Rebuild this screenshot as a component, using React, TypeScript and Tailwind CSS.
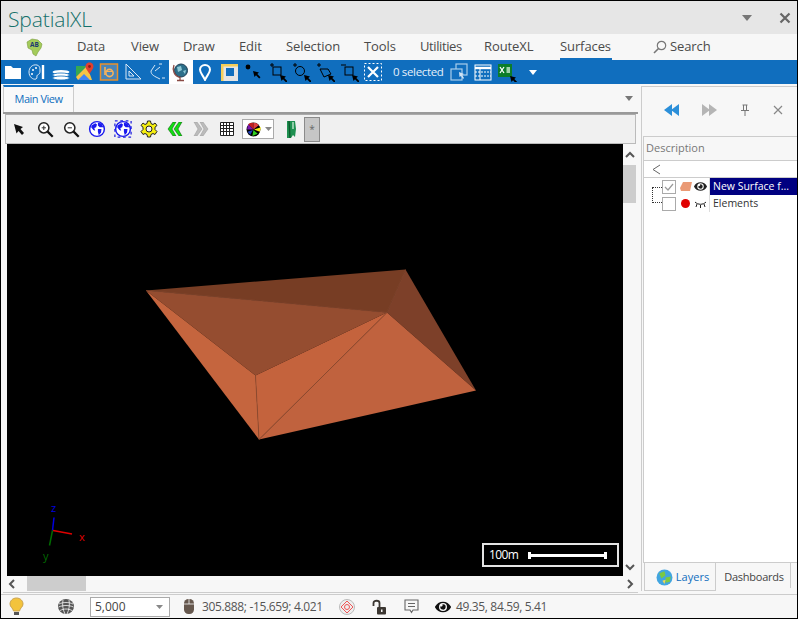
import type { ReactNode } from "react";
import { FaEye } from "react-icons/fa";

const font = "font-['Open_Sans','Liberation_Sans',sans-serif]";

function Cursor({ x = 11, y = 11 }: { x?: number; y?: number }) {
  return <path transform={`translate(${x} ${y})`} d="M0 0 L6 1.5 L4.3 3 L7.5 6.2 L6.2 7.5 L3 4.3 L1.5 6 Z" fill="#000" />;
}

function Svg({ children, size = 20 }: { children: ReactNode; size?: number }) {
  return (
    <svg width={size} height={size} viewBox="0 0 20 20" fill="none">
      {children}
    </svg>
  );
}

function Globe({ dashed = false }: { dashed?: boolean }) {
  return (
    <Svg size={18}>
      {dashed && <rect x="1" y="1" width="18" height="18" stroke="#2222dd" strokeWidth="1.4" strokeDasharray="3 3" />}
      <circle cx="10" cy="10" r="8.2" fill="#fff" stroke="#1a1aee" strokeWidth="1.6" />
      <path d="M4 6 L8 3.5 L10 5 L9 8 L7 9 L8 12 L6 11 L3.5 8 Z M11 3 L15 4 L17 8 L13 8 L11 6 Z M11 10 L15 10 L14.5 14 L12 17 L11 13 Z" fill="#1a1aee" />
    </Svg>
  );
}

function Chevrons({ color, flip = false }: { color: string; flip?: boolean }) {
  return (
    <svg width="16" height="14" viewBox="0 0 16 14" className={flip ? "-scale-x-100" : ""}>
      <path d="M6 0 L9 0 L5 7 L9 14 L6 14 L1 7 Z M12 0 L15 0 L11 7 L15 14 L12 14 L7 7 Z" fill={color} stroke={color === "#11dd11" ? "#0a4d0a" : "#999"} strokeWidth="0.5" />
    </svg>
  );
}

function Magnifier({ plus }: { plus: boolean }) {
  return (
    <Svg size={17}>
      <circle cx="8" cy="8" r="6" fill="#fff" stroke="#222" strokeWidth="1.8" />
      <path d="M5.5 8 H10.5" stroke="#333" strokeWidth="1.2" />
      {plus && <path d="M8 5.5 V10.5" stroke="#333" strokeWidth="1.2" />}
      <path d="M12.5 12.5 L18.5 18.5" stroke="#111" strokeWidth="2.6" />
    </Svg>
  );
}

const blueIcons: ReactNode[] = [
  <Svg key="folder">
    <path d="M2 4 H8 L10 6 H18 V17 H2 Z" fill="#fff" />
  </Svg>,
  <Svg key="palette">
    <path d="M10 3 C5 2 2 6 2 10 C2 15 6 18 9 17 C11 16 9 14 10.5 13 C12 12 13 12 13 9 C13 6 13 4 10 3 Z" stroke="#dbe8f5" strokeWidth="1" />
    <circle cx="6" cy="8" r="1" fill="#fff" />
    <circle cx="9" cy="6" r="1" fill="#fff" />
    <circle cx="5" cy="12" r="1" fill="#fff" />
    <path d="M16 3 V17" stroke="#fff" strokeWidth="2.4" />
  </Svg>,
  <Svg key="layers">
    <ellipse cx="10" cy="10" rx="8.5" ry="2" fill="#fff" />
    <ellipse cx="10" cy="13" rx="8.5" ry="2" fill="#fff" stroke="#106ebe" strokeWidth="0.8" />
    <ellipse cx="10" cy="16" rx="8.5" ry="2" fill="#fff" stroke="#106ebe" strokeWidth="0.8" />
  </Svg>,
  <Svg key="maps">
    <path d="M1 4 H12 L1 15 Z" fill="#35a852" />
    <path d="M1 15 L12 4 L17 18 H3 Z" fill="#f6c445" />
    <path d="M3 18 L9 12 L15 18 Z" fill="#4285f4" />
    <path d="M14.5 0.5 C11.5 0.5 10.5 3 10.5 4.5 C10.5 7 13 9 14.5 12 C16 9 18.5 7 18.5 4.5 C18.5 3 17.5 0.5 14.5 0.5 Z" fill="#e2402f" />
    <circle cx="14.5" cy="4.5" r="1.4" fill="#8c1d18" />
  </Svg>,
  <Svg key="bing">
    <rect x="1.5" y="2" width="17" height="16" fill="#4a85b8" stroke="#e8912d" strokeWidth="1.5" />
    <circle cx="10.5" cy="11" r="3.6" stroke="#f6b25a" strokeWidth="1.6" />
    <path d="M6 5 V13" stroke="#f6b25a" strokeWidth="1.6" />
    <path d="M6 9.5 H14" stroke="#f6b25a" strokeWidth="1" />
  </Svg>,
  <Svg key="square">
    <path d="M3 2 V17 H18 Z M6 9 V14 H11 Z" stroke="#dbe8f5" strokeWidth="1" />
  </Svg>,
  <Svg key="axes">
    <path d="M8 3 L4 9 C4 13 7 14 13 17 M8 9 L13 5" stroke="#dbe8f5" strokeWidth="1" />
    <path d="M12 2 H15 M15 16 H18" stroke="#dbe8f5" strokeWidth="1" />
  </Svg>,
];

const drawIcons: ReactNode[] = [
  <Svg key="dot">
    <circle cx="5" cy="5" r="2.4" fill="#000" />
    <Cursor x={10} y={9} />
  </Svg>,
  <Svg key="rect">
    <path d="M3 3 H7 M5 1 V5" stroke="#000" />
    <rect x="6" y="5" width="8" height="8" stroke="#000" />
    <Cursor x={13} y={13} />
  </Svg>,
  <Svg key="circle">
    <path d="M2 3 H6 M4 1 V5" stroke="#000" />
    <circle cx="9" cy="9" r="4.5" stroke="#000" />
    <Cursor x={13} y={13} />
  </Svg>,
  <Svg key="poly">
    <path d="M2 3 H6 M4 1 V5" stroke="#000" />
    <path d="M5 7 L13 7 L16 12 L9 15 Z" stroke="#000" />
    <Cursor x={13} y={13} />
  </Svg>,
  <Svg key="minus">
    <path d="M2 3 H7" stroke="#000" />
    <rect x="6" y="5" width="8" height="8" stroke="#000" />
    <Cursor x={13} y={13} />
  </Svg>,
  <Svg key="clear">
    <rect x="1.5" y="1.5" width="17" height="17" stroke="#fff" strokeDasharray="2 2" />
    <path d="M5 5 L15 15 M15 5 L5 15" stroke="#fff" strokeWidth="2.2" />
  </Svg>,
];

function Slot({ children, active = false }: { children: ReactNode; active?: boolean }) {
  return <div className={`w-6 h-6 flex items-center justify-center ${active ? "bg-white" : ""}`}>{children}</div>;
}

function Tool({ children }: { children: ReactNode }) {
  return <div className="w-[26px] h-full flex items-center justify-center shrink-0">{children}</div>;
}

function Scene() {
  return (
    <svg viewBox="7 144 616 431" className="w-full h-full block">
      <polygon points="146,290 405.5,269 387,312" fill="#773d24" />
      <polygon points="405.5,269 476,390 387,312" fill="#7d4029" />
      <polygon points="146,290 387,312 255.5,375" fill="#954d30" />
      <polygon points="146,290 255.5,375 259,439" fill="#c5653e" />
      <polygon points="255.5,375 387,312 259,439" fill="#c4633d" />
      <polygon points="387,312 476,390 259,439" fill="#c0623e" />
      <path d="M255.5 375 L259 439 M387 312 L259 439 M146 290 L387 312 M387 312 L405.5 269" stroke="#8a4a30" strokeWidth="0.7" />
      <path d="M52.5 530 L54 517" stroke="#0000e0" strokeWidth="1.5" />
      <path d="M53 530 L72 533.5" stroke="#e00000" strokeWidth="1.5" />
      <path d="M52.5 530 L49.5 545" stroke="#006a00" strokeWidth="1.5" />
      <text x="51" y="511" fontSize="11" fill="#0000e0" fontFamily="Open Sans">z</text>
      <text x="79" y="540" fontSize="11" fill="#e00000" fontFamily="Open Sans">x</text>
      <text x="43" y="559" fontSize="11" fill="#006a00" fontFamily="Open Sans">y</text>
    </svg>
  );
}

function ScaleBar() {
  return (
    <div className="absolute left-[475px] top-[399px] w-[137px] h-[24px] border-2 border-[#e4e4e4] flex items-center text-white text-[12px] tracking-[-0.6px]">
      <span className="ml-[5px] w-[39px]">100m</span>
      <div className="w-[79px] h-[3px] bg-white relative">
        <div className="absolute left-0 top-[-2px] w-[3px] h-[7px] bg-white" />
        <div className="absolute right-0 top-[-2px] w-[3px] h-[7px] bg-white" />
      </div>
    </div>
  );
}

function Arrow({ d }: { d: string }) {
  return (
    <svg width="10" height="10" viewBox="0 0 10 10" fill="none">
      <path d={d} stroke="#555" strokeWidth="2" />
    </svg>
  );
}

export default function App() {
  return (
    <div className={`w-[798px] h-[619px] border border-black bg-[#f7f7f7] flex flex-col overflow-hidden text-[#444] ${font}`}>
      {/* title bar */}
      <div className="h-[33px] shrink-0 bg-[#e6e6e6] flex items-center pl-[7px] pr-[6px]">
        <span className="text-[#14706a] text-[21px] font-light leading-none mt-[3px] flex-1 tracking-[-0.1px]">SpatialXL</span>
        <svg width="12" height="8" viewBox="0 0 12 8" className="mr-[26px]">
          <path d="M1 1 H11 L6 7 Z" fill="#777" />
        </svg>
        <svg width="12" height="12" viewBox="0 0 12 12">
          <path d="M1.5 1.5 L10.5 10.5 M10.5 1.5 L1.5 10.5" stroke="#666" strokeWidth="2.2" />
        </svg>
      </div>

      {/* menu */}
      <div className="h-[26px] shrink-0 flex items-center text-[13px] text-[#4a4a4a] tracking-[-0.1px]">
        <div className="w-[64px] flex justify-center pl-[1px] mr-[12px]">
          <svg width="20" height="20" viewBox="0 0 20 20">
            <path d="M3 5 L8 2 L14 3 L18 7 L17 11 L14 15 L12 19 L9 17 L8 13 L4 11 Z" fill="#a4cc5a" stroke="#789a3c" strokeWidth="0.6" />
            <text x="6" y="10" fontSize="6.5" fontWeight="700" fill="#1d3a70">AB</text>
          </svg>
        </div>
        <span className="w-[54px]">Data</span>
        <span className="w-[52px]">View</span>
        <span className="w-[56px]">Draw</span>
        <span className="w-[47px]">Edit</span>
        <span className="w-[78px]">Selection</span>
        <span className="w-[56px]">Tools</span>
        <span className="w-[64px] tracking-[-0.4px]">Utilities</span>
        <span className="w-[76px]">RouteXL</span>
        <span className="w-[93px] self-stretch relative flex items-center">
          Surfaces
          <span className="absolute left-0 bottom-0 w-[52px] h-[2px] bg-[#106ebe]" />
        </span>
        <svg width="14" height="14" viewBox="0 0 14 14" fill="none" className="mr-[3px]">
          <circle cx="8.5" cy="5.5" r="4.2" stroke="#777" strokeWidth="1.2" />
          <path d="M5.5 8.5 L1 13" stroke="#777" strokeWidth="1.6" />
        </svg>
        <span>Search</span>
      </div>

      {/* blue toolbar */}
      <div className="h-6 shrink-0 bg-[#106ebe] flex items-center">
        {blueIcons.map((icon, i) => (
          <Slot key={i}>{icon}</Slot>
        ))}
        <Slot active>
          <Svg>
            <circle cx="10" cy="8.5" r="6.5" fill="#2c6f8a" stroke="#1f3f55" />
            <path d="M6 5 L10 4 L11 8 L7 10 Z M12 9 L15 8 L14 12 Z" fill="#8fc9d6" />
            <path d="M3 3 C1 8 3 14 9 15.5 V18 M6 18.5 H13" stroke="#8a4b45" strokeWidth="1.3" />
          </Svg>
        </Slot>
        <Slot>
          <svg width="12" height="17" viewBox="0 0 12 17" fill="none">
            <path d="M6 1 C3 1 1 3 1 5.8 C1 9 4.500 12 6 16 C7.500 12 11 9 11 5.8 C11 3 9 1 6 1 Z" stroke="#fff" strokeWidth="2" />
            <circle cx="6" cy="5.800" r="1.800" fill="#106ebe" />
          </svg>
        </Slot>
        <Slot>
          <svg width="17" height="17" viewBox="0 0 17 17">
            <rect x="0" y="0" width="17" height="17" fill="#e4e4e4" />
            <path d="M0 0 H17 V2.500 H2.500 V17 H0 Z" fill="#f5cf5a" />
            <rect x="5" y="4" width="8" height="8" fill="#106ebe" />
          </svg>
        </Slot>
        {drawIcons.map((icon, i) => (
          <Slot key={i}>{icon}</Slot>
        ))}
        <span className="ml-[8px] w-[54px] text-[11.5px] text-[#e6f0fa] tracking-[-0.35px] whitespace-nowrap">0 selected</span>
        <Slot>
          <Svg>
            <rect x="7" y="2" width="11" height="11" stroke="#a9cdeb" strokeWidth="1.2" />
            <rect x="2" y="7" width="11" height="11" fill="#106ebe" stroke="#a9cdeb" strokeWidth="1.2" />
            <path d="M10 10 L15 12 L13 13 L15 16 L14 17 L12 14 L10.5 15 Z" fill="#cfe3f5" />
          </Svg>
        </Slot>
        <Slot>
          <Svg>
            <rect x="2" y="3" width="16" height="15" stroke="#fff" strokeWidth="1" />
            <path d="M2 6 H18" stroke="#fff" strokeWidth="2.4" />
            <path d="M2 10 H18 M2 14 H18" stroke="#fff" strokeDasharray="2 1" />
            <path d="M7 6 V18" stroke="#fff" />
          </Svg>
        </Slot>
        <Slot>
          <Svg>
            <rect x="1" y="2" width="14" height="13" fill="#0c7d2a" />
            <path d="M3 5 L7 11 M7 5 L3 11" stroke="#fff" strokeWidth="1.3" />
            <rect x="9.5" y="5" width="3.5" height="6" fill="#9fd4ac" />
            <Cursor x={13} y={14} />
          </Svg>
        </Slot>
        <svg width="8" height="5" viewBox="0 0 8 5" className="ml-[10px]">
          <path d="M0 0 H8 L4 5 Z" fill="#fff" />
        </svg>
      </div>

      {/* workspace */}
      <div className="flex-1 min-h-0 flex">
        {/* main column */}
        <div className="w-[640px] shrink-0 pl-[2px] pr-[3px] flex flex-col">
          <div className="h-[28px] shrink-0 flex items-end relative">
            <div className="w-[71px] h-[27px] border-t-2 border-t-[#106ebe] border-x border-x-[#ccc] flex items-center justify-center text-[11px] tracking-[-0.5px] text-[#106ebe] bg-[#f9f9f9]">
              Main View
            </div>
            <svg width="8" height="5" viewBox="0 0 8 5" className="absolute right-[5px] top-[12px]">
              <path d="M0 0 H8 L4 5 Z" fill="#777" />
            </svg>
          </div>
          <div className="flex-1 min-h-0 border-t-2 border-t-[#999] border-b border-b-[#ccc] bg-[#f7f7f7] flex flex-col pb-[1px]">
            <div className="h-[30px] shrink-0 mx-[2px] bg-[#f0f0f0] border border-[#bbb] border-t-[#aaa] flex items-center">
              <Tool>
                <svg width="12" height="13" viewBox="0 0 12 13">
                  <path d="M1 1 L10 4 L7.5 6 L11 10 L9 12 L5.5 8 L3.5 10.5 Z" fill="#111" />
                </svg>
              </Tool>
              <Tool><Magnifier plus /></Tool>
              <Tool><Magnifier plus={false} /></Tool>
              <Tool><Globe /></Tool>
              <Tool><Globe dashed /></Tool>
              <Tool>
                <svg width="18" height="18" viewBox="0 0 18 18">
                  <path d="M7.5 1 H10.5 L11 3.5 L13 4.5 L15 3 L17 5.5 L15 7.2 V9.5 L17 11.5 L15 14.5 L13 13.5 L11 14.5 L10.5 17 H7.5 L7 14.5 L5 13.5 L3 14.5 L1 11.5 L3 9.5 V7.2 L1 5.5 L3 3 L5 4.5 L7 3.5 Z" fill="#f5ee10" stroke="#222" strokeWidth="1" />
                  <circle cx="9" cy="9" r="3" fill="#f0f0f0" stroke="#222" />
                </svg>
              </Tool>
              <Tool><Chevrons color="#11dd11" /></Tool>
              <Tool><Chevrons color="#bbb" flip /></Tool>
              <Tool>
                <svg width="14" height="14" viewBox="0 0 14 14">
                  <path d="M.5 .5 H13.5 V13.5 H.5 Z M3.5 .5 V13.5 M6.5 .5 V13.5 M9.5 .5 V13.5 M.5 3.5 H13.5 M.5 6.5 H13.5 M.5 9.5 H13.5" stroke="#222" fill="#fff" />
                </svg>
              </Tool>
              <div className="ml-[2px] w-[32px] h-[20px] bg-white border border-[#aaa] flex items-center pl-[3px] gap-[3px] shrink-0">
                <svg width="16" height="15" viewBox="0 0 15 14">
                  <circle cx="7" cy="7" r="6.5" fill="#000" />
                  <path d="M7 7 L2 2 A7 7 0 0 1 7 .8 Z" fill="#c02020" />
                  <path d="M7 7 L7 .8 A6 6 0 0 1 12 3 Z" fill="#e04040" />
                  <path d="M7 7 L1 7 L2 2 Z" fill="#7a18b0" />
                  <path d="M7.5 7 L14 5 L13 9 Z" fill="#f5ee10" />
                  <path d="M7 7.5 L11 11 L6 13 Z" fill="#30d020" />
                  <path d="M6.5 7.5 L4 12 L1.5 9 Z" fill="#2040c0" />
                </svg>
                <svg width="7" height="4" viewBox="0 0 7 4">
                  <path d="M0 0 H7 L3.5 4 Z" fill="#888" />
                </svg>
              </div>
              <div className="ml-[8px] w-[17px] flex justify-center shrink-0">
                <svg width="12" height="19" viewBox="0 0 12 19">
                  <path d="M2 1 H10 L11 9 L10 17 L8 15 L6 18 L2 18 Z" fill="#1e9050" />
                  <path d="M4 1 L5 18" stroke="#0b5a2c" strokeWidth="1.4" />
                  <path d="M8 2 V9" stroke="#b4e0c4" strokeWidth="1.5" />
                </svg>
              </div>
              <div className="ml-[5px] w-[16px] h-[25px] bg-[#c6c6c6] border border-[#8a8a8a] flex items-center justify-center text-[10px] text-[#666] shrink-0">*</div>
            </div>
            <div className="flex-1 min-h-0 flex pl-[4px]">
              <div className="w-[616px] bg-black relative shrink-0">
                <Scene />
                <ScaleBar />
              </div>
              <div className="w-[13px] flex flex-col items-center">
                <div className="h-[21px] flex items-center justify-center"><Arrow d="M1 7 L5 3 L9 7" /></div>
                <div className="w-full h-[38px] bg-[#cdcdcd]" />
                <div className="flex-1" />
                <div className="h-[18px] flex items-center justify-center"><Arrow d="M1 3 L5 7 L9 3" /></div>
              </div>
            </div>
            <div className="h-[15px] shrink-0 flex items-center pl-[4px] pr-[2px]">
              <div className="w-[20px] flex justify-start"><Arrow d="M7 1 L3 5 L7 9" /></div>
              <div className="w-[59px] h-full bg-[#cdcdcd]" />
              <div className="flex-1" />
              <div className="w-[13px] flex justify-center"><Arrow d="M3 1 L7 5 L3 9" /></div>
            </div>
          </div>
        </div>

        {/* right panel */}
        <div className="flex-1 mt-[2px] mb-[2px] border-l border-t border-[#ccc] flex flex-col min-w-0">
          <div className="h-[49px] shrink-0 flex items-center pb-[4px]">
            <svg width="16" height="12" viewBox="0 0 16 12" className="ml-[22px]">
              <path d="M8 0 V12 L0 6 Z M15 0 V12 L7 6 Z" fill="#2b8fd9" />
            </svg>
            <svg width="16" height="12" viewBox="0 0 16 12" className="ml-[21px]">
              <path d="M1 0 V12 L9 6 Z M8 0 V12 L16 6 Z" fill="#b5b5b5" />
            </svg>
            <svg width="10" height="12" viewBox="0 0 10 12" className="ml-[23px]" fill="none">
              <path d="M2.5 1 H7.5 M3.5 1 V6 M6.5 1 V6 M1 6.5 H9 M5 6.5 V12" stroke="#777" />
            </svg>
            <svg width="10" height="10" viewBox="0 0 10 10" className="ml-[23px]" fill="none">
              <path d="M1 1 L9 9 M9 1 L1 9" stroke="#888" strokeWidth="1.2" />
            </svg>
          </div>
          <div className="flex-1 min-h-0 ml-[1px] bg-white border-l border-t border-b border-[#ccc] flex flex-col">
            <div className="h-[24px] shrink-0 bg-[#f7f7f7] border-b border-[#ccc] flex items-center pl-[2px] text-[11px] text-[#777]">Description</div>
            <div className="h-[17px] shrink-0 border-b border-[#ccc] flex items-center pl-[8px]">
              <svg width="9" height="11" viewBox="0 0 9 11" fill="none">
                <path d="M8 1 L1 5.5 L8 10" stroke="#666" />
              </svg>
            </div>
            <div className="flex flex-col relative pl-[18px] text-[10.5px] text-[#333]">
              <div className="absolute left-[8px] top-[9px] w-[10px] h-[16px] border-l border-t border-b border-dotted border-[#333]" />
              {[
                { label: "New Surface f...", selected: true },
                { label: "Elements", selected: false },
              ].map((row) => (
                <div key={row.label} className="h-[17px] flex items-center">
                  <div className="w-[14px] h-[14px] border border-[#aaa] bg-white flex items-center justify-center shrink-0">
                    {row.selected && (
                      <svg width="10" height="8" viewBox="0 0 10 8" fill="none">
                        <path d="M1 4 L4 7 L9 1" stroke="#999" strokeWidth="1.2" />
                      </svg>
                    )}
                  </div>
                  <div className="w-[17px] flex justify-center shrink-0 pl-[2px]">
                    {row.selected ? (
                      <svg width="12" height="11" viewBox="0 0 12 11">
                        <path d="M3 1 H12 L10 10 H1 L0 7 Z" fill="#ea9a75" />
                      </svg>
                    ) : (
                      <span className="w-[9px] h-[9px] rounded-full bg-[#e00000]" />
                    )}
                  </div>
                  <div className="w-[15px] flex justify-center shrink-0 text-[#222] text-[13px]">
                    {row.selected ? (
                      <FaEye />
                    ) : (
                      <svg width="13" height="8" viewBox="0 0 13 8" fill="none">
                        <path d="M1 2 C4 5 9 5 12 2 M3 4 L2 7 M6.5 5 V8 M10 4 L11 7" stroke="#222" />
                      </svg>
                    )}
                  </div>
                  <div className={`ml-[1px] flex-1 h-full flex items-center pl-[3px] border-l border-[#ddd] whitespace-nowrap ${row.selected ? "bg-[#000080] text-white" : ""}`}>
                    {row.label}
                  </div>
                </div>
              ))}
            </div>
          </div>
          <div className="h-[28px] shrink-0 flex items-stretch pl-[2px] text-[11px]">
            <div className="w-[72px] border-x border-b border-[#ccc] flex items-center justify-center gap-[3px] pl-[5px] pt-[1px] text-[#106ebe]">
              <svg width="17" height="17" viewBox="0 0 16 16">
                <circle cx="8" cy="8" r="7.5" fill="#42a5e0" />
                <path d="M3 4 L8 2 L9 6 L5 9 Z M9 8 L14 7 L13 12 L9 13 Z" fill="#7ac943" />
                <path d="M6 11 L9 10 L8 14 Z" fill="#f2d94e" />
              </svg>
              Layers
            </div>
            <div className="w-[75px] flex items-center justify-center border-r border-[#ccc] mb-[3px] pl-[2px] pt-[3px] tracking-[-0.25px] text-[#444]">Dashboards</div>
          </div>
        </div>
      </div>

      {/* status bar */}
      <div className="h-[24px] shrink-0 border-t border-[#ccc] flex items-center text-[12px] text-[#555] whitespace-nowrap mt-[1px]">
        <div className="w-[30px] flex justify-center">
          <svg width="15" height="19" viewBox="0 0 15 19">
            <path d="M7.5 1 C3.5 1 1 4 1 7 C1 10 4 11 4.5 14 H10.5 C11 11 14 10 14 7 C14 4 11.5 1 7.5 1 Z" fill="#f3c33c" stroke="#caa24d" />
            <path d="M5 15 H10 V18 H5 Z" fill="#555" />
          </svg>
        </div>
        <div className="w-[20px] ml-[25px] flex justify-center">
          <svg width="16" height="15" viewBox="0 0 16 15">
            <ellipse cx="8" cy="7.5" rx="8" ry="7.5" fill="#555" />
            <path d="M1 5 C5 3 11 3 15 5 M0.5 8 C5 6 11 6 15.5 8 M2 11.5 C6 9.5 10 9.5 14 11.5 M5 1 C4 6 5 11 7 15 M11 1 C12 6 11 11 9 15" stroke="#f7f7f7" strokeWidth="0.8" fill="none" />
          </svg>
        </div>
        <div className="ml-[14px] w-[80px] h-[20px] bg-white border border-[#aaa] flex items-center justify-between pl-[4px] pr-[6px] text-[#444]">
          5,000
          <svg width="7" height="4" viewBox="0 0 7 4">
            <path d="M0 0 H7 L3.5 4 Z" fill="#888" />
          </svg>
        </div>
        <svg width="10" height="15" viewBox="0 0 10 15" className="ml-[14px]">
          <rect x="0" y="0" width="10" height="15" rx="4.5" fill="#66584e" />
          <path d="M5 0 V5 M0 5 H10" stroke="#f7f7f7" strokeWidth="0.8" />
        </svg>
        <span className="ml-[8px] w-[137px] tracking-[-0.35px]">305.888; -15.659; 4.021</span>
        <div className="w-[16px] flex justify-center">
          <svg width="16" height="16" viewBox="0 0 16 16" fill="none">
            <circle cx="8" cy="8" r="7.5" fill="#eee" stroke="#bbb" />
            <path d="M8 2 L14 8 L8 14 L2 8 Z" stroke="#e55" />
            <circle cx="8" cy="8" r="2.5" stroke="#e55" />
          </svg>
        </div>
        <div className="ml-[16px] w-[16px] flex justify-center">
          <svg width="15" height="16" viewBox="0 0 15 16" fill="none">
            <path d="M1.5 7 V4 C1.5 1 7.500 1 7.500 4 V8" stroke="#3c3732" strokeWidth="1.8" />
            <rect x="5" y="8" width="9" height="7.500" rx="1" fill="#3c3732" />
            <rect x="9" y="10.500" width="1.500" height="2.500" fill="#f7f7f7" />
          </svg>
        </div>
        <div className="ml-[16px] w-[16px] flex justify-center">
          <svg width="15" height="15" viewBox="0 0 15 15" fill="none">
            <path d="M1 1 H14 V11 H9 L7.5 13.5 L6 11 H1 Z M4 4.5 H11 M4 7.5 H11" stroke="#666" strokeWidth="1.1" />
          </svg>
        </div>
        <div className="ml-[16px] w-[16px] flex justify-center text-[16px] text-[#111]"><FaEye /></div>
        <span className="ml-[5px] tracking-[-0.35px]">49.35, 84.59, 5.41</span>
      </div>
    </div>
  );
}
